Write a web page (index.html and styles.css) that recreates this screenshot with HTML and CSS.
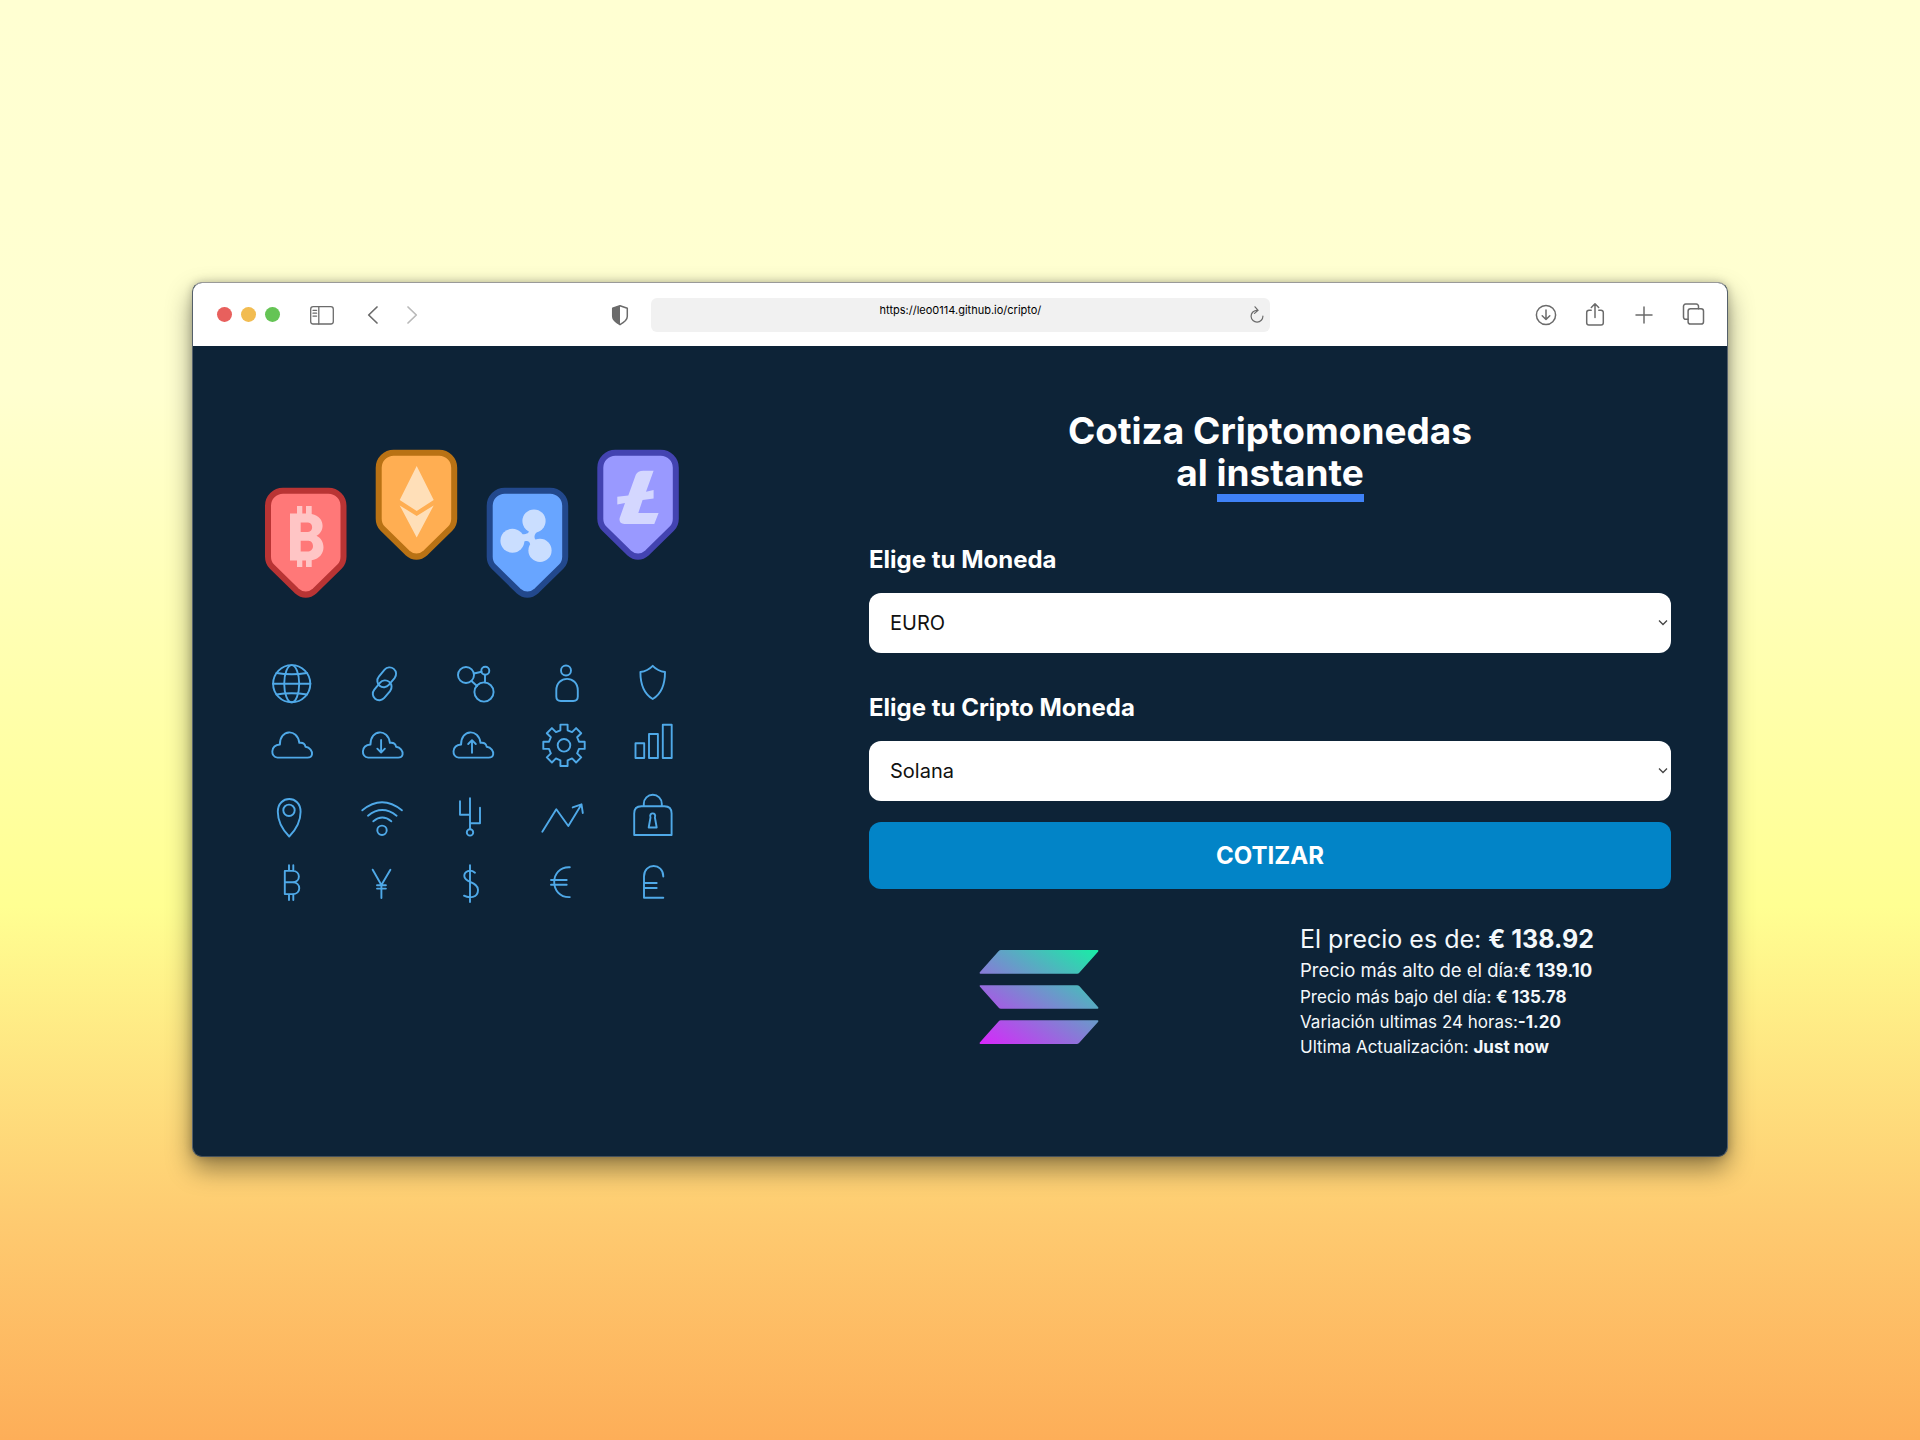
FILE: index.html
```html
<!DOCTYPE html>
<html lang="es">
<head>
<meta charset="utf-8">
<title>Cotiza Criptomonedas</title>
<link rel="stylesheet" href="styles.css">
</head>
<body>
<div class="window">
  <header class="toolbar">
    <div class="lights"><i class="light red"></i><i class="light yellow"></i><i class="light green"></i></div>
    <svg class="icon sidebar" width="26" height="22" viewBox="309 302 26 22"><rect x="310.7" y="304.7" width="22.6" height="17.3" rx="2.5"/><path d="M318.8 304.7V322M313 308.3h3.6M313 311.2h3.6M313 314.1h3.6"/></svg>
    <svg class="icon back" width="12" height="20" viewBox="367 303.3 12 20"><path d="M377 305.3l-8.3 8 8.3 8"/></svg>
    <svg class="icon forward" width="12" height="20" viewBox="406 303.3 12 20"><path d="M408 305.3l8.3 8-8.3 8"/></svg>
    <svg class="icon privacy" width="18" height="22" viewBox="611 302.3 18 22"><path d="M620 304l7.3 2.6v8.2c0 3.6-3.2 5.8-7.3 8.2-4.1-2.4-7.3-4.6-7.3-8.2v-8.2z"/><path class="solid" d="M620 304v19c-4.1-2.4-7.3-4.6-7.3-8.2v-8.2z"/></svg>
    <div class="address">
      <span class="url">https://leo0114.github.io/cripto/</span>
      <svg class="icon reload" width="14" height="18" viewBox="1249 305 14 18"><path d="M1255.6 309.3a5.9 5.9 0 1 0 6.3 5.8M1254 305.8l3.1 3.6-3.6 3"/></svg>
    </div>
    <svg class="icon download" width="22" height="22" viewBox="1535 302.3 22 22"><circle cx="1546" cy="313.3" r="9.6"/><path d="M1546 308.3v9.4M1542.2 314l3.8 3.8 3.8-3.8"/></svg>
    <svg class="icon share" width="20" height="25" viewBox="1585.4 300 20 25"><path d="M1591.6 308.2h-2.2a2.3 2.3 0 0 0-2.3 2.3v10.2a2.3 2.3 0 0 0 2.3 2.3h12a2.3 2.3 0 0 0 2.3-2.3v-10.2a2.3 2.3 0 0 0-2.3-2.3h-2.2M1595.4 315.5v-13.3M1591.7 305.5l3.7-3.7 3.7 3.7"/></svg>
    <svg class="icon plus" width="18" height="18" viewBox="1635.5 304.5 18 18"><path d="M1644.5 305.5v16M1636.5 313.5h16"/></svg>
    <svg class="icon tabs" width="23" height="23" viewBox="1682.5 302 23 23"><path d="M1688.6 318.3h-2.4a2.2 2.2 0 0 1-2.2-2.2v-10.8a2.2 2.2 0 0 1 2.2-2.2h10.6a2.2 2.2 0 0 1 2.2 2.2v2.4"/><rect x="1688.6" y="307.7" width="15.4" height="15.4" rx="2.4"/></svg>
  </header>

  <main class="page">
    <svg class="art" width="430" height="460" viewBox="260 446 430 460">
      <defs>
        <path id="badge" d="M3 18a15 15 0 0 1 15-15h45.5a15 15 0 0 1 15 15V69q0 6-4 10L50 103q-9.25 8-18.5 0L7 79q-4-4-4-10Z"/>
        <path id="cloud" d="M6.5 25.3C-.6 25-1 13 8.9 12.2 8.7-3.2 26.5-4 28.3 10.5c3.700-.5 5.700 1.200 6.200 4C39 15 41.400 19 41 22c-.4 2.500-2 3.300-4.500 3.300Z"/>
      </defs>
      <g class="badge btc" transform="translate(265 487.700)">
        <use href="#badge"/>
        <path class="mark" fill-rule="evenodd" d="M25 25.700H32V18.300H37.300V25.700H41V18.300H46.700V26.200C60 28.500 60.500 43.500 51.500 48 61.500 52.500 61.500 70.500 46.700 72.500V79.300H41V72.700H37.300V79.300H32V72.700H25ZM35.700 34.700V44.300H43C48.500 44 48.500 35 43 34.700ZM35.700 53V63.700H43.500C49.500 63.300 49.500 53.400 43.500 53Z"/>
      </g>
      <g class="badge eth" transform="translate(375.700 449.700)">
        <use href="#badge"/>
        <path class="mark" d="M41 16.300 58 50.300 41 61.300 24 50.300ZM24 55.700 41 66.300 58 55.700 41 87.700Z"/>
      </g>
      <g class="badge xrp" transform="translate(486.700 487.700)">
        <use href="#badge"/>
        <g class="mark"><circle cx="47.300" cy="33.300" r="11.600"/><circle cx="25.700" cy="53" r="12"/><circle cx="53.300" cy="62.700" r="11.600"/><path d="M42 42c.8 3-1 4.500-6.500 4.500v8c5-2 7.500-1.500 8 2.500l6-4.500c-2.500-2-2.500-6 2-9.500Z"/></g>
      </g>
      <g class="badge ltc" transform="translate(597.300 449.700)">
        <use href="#badge"/>
        <path class="mark" d="M46 21H56.300L48.700 42 56.300 40.300V48.700L45.300 50.300 41 63.300H61.300L57 74.300H27Q21.500 74 22.300 68.500L27.700 53.300 20 54.700V47L31 45.700 38.500 25Q40.500 21 46 21Z"/>
      </g>

      <g class="line">
        <circle cx="291.700" cy="683.700" r="18.600"/><ellipse cx="291.700" cy="683.700" rx="7.500" ry="18.600"/><path d="M273 683.700h37.400M276.500 673q15.200 2.400 30.400 0M276.500 694.500q15.200-2.400 30.400 0"/>
        <rect x="375.700" y="670.800" width="22" height="13" rx="6.500" transform="rotate(-50 386.700 677.300)"/><rect x="371.200" y="683.800" width="22" height="13" rx="6.500" transform="rotate(-50 382.200 690.300)"/>
        <circle cx="466" cy="675" r="8"/><circle cx="485.300" cy="670.700" r="4"/><circle cx="484" cy="692" r="9.600"/><path d="M474 673.500l7.500-1.700M485 674.700v7.700M471.500 681l5.500 5"/>
        <circle cx="566" cy="670.500" r="5"/><path d="M556.300 690.500c0-15.500 21.500-15.500 21.500 0v6q0 4.500-4.500 4.500h-12.500q-4.500 0-4.500-4.500Z"/>
        <path d="M652.700 665.800q5 5.200 12.300 6.200c0 11-2 21-12.300 27-10.300-6-12.300-16-12.300-27q7.300-1 12.300-6.200Z"/>

        <use href="#cloud" x="271" y="732.300"/>
        <use href="#cloud" x="361.600" y="732.300"/><path d="M381.100 740v12.500M377.300 748.700l3.800 3.800 3.800-3.800"/>
        <use href="#cloud" x="452.200" y="732.300"/><path d="M472 752.700V740.200M468.200 744l3.800-3.800 3.800 3.800"/>
        <g transform="translate(564 745.300)"><path d="M-3.600-15V-20.700H3.600V-15L8.060-13.150 12.090-17.180 17.180-12.090 13.150-8.060 15-3.600H20.700V3.600H15L13.150 8.060 17.180 12.090 12.090 17.180 8.060 13.150 3.600 15V20.700H-3.600V15L-8.060 13.150-12.090 17.180-17.180 12.090-13.150 8.060-15 3.600H-20.700V-3.600H-15L-13.150-8.060-17.180-12.090-12.090-17.180-8.060-13.150Z"/><circle r="6.300"/></g>
        <path d="M635.500 743.200h8.700v14.800h-8.700ZM649 734h8.900v24h-8.900ZM662.800 724.700h8.900v33.300h-8.900Z"/>

        <path d="M289.200 836.500c-7-7-11.400-16-11.400-24.700 0-17 22.800-17 22.800 0 0 8.700-4.400 17.700-11.400 24.700Z"/><circle cx="289" cy="810.300" r="5.700"/>
        <circle cx="382" cy="830.300" r="4.700"/><path d="M362.300 810.300q19.700-16 39.600 0M368 815.700q14.200-11.200 28.600 0M373.300 821.300q9-7.400 18 0"/>
        <path d="M470 798.300V829M460 801.300v13.400h10M480 807.700v15.600h-10"/><circle cx="470" cy="832.400" r="3.200"/>
        <path d="M542.300 831.700l14-22.400 12 16.700 13-21.300M572.700 807.400l8.800-3.100 1.300 8.700"/>
        <path d="M634.200 835v-21.500q0-7.200 7.200-7.200h23q7.200 0 7.200 7.200V835ZM643.800 806.300v-2.500a9 9 0 0 1 18 0v2.500M650.500 817.500c-2-5.500 6.400-5.500 4.400 0l1.800 10h-8Z"/>

        <path d="M284.800 870.900V894.100M284.800 870.900H292.500C301 870.900 301 882.300 292.500 882.300H284.800M292.500 882.300C301.500 882.300 301.500 894.100 292.500 894.100H284.800M289 865.300v5.600M293.300 865.300v5.600M289 894.100v5.900M293.300 894.100v5.900"/>
        <path d="M372.700 869.700l8.700 15.300 9-15.300M381.400 885v13M377 885.300h8.900M377 888.600h8.900"/>
        <path d="M470 865.300V902M475 872.700c-5-4.200-10.700-1.200-10.700 3.300 0 7 13.700 5.500 13.700 14 0 8-9 8.500-14 5.700"/>
        <path d="M569.800 867.200c-20.800-1-20.800 30.600 0 29.900M551 880h15.700M551 884.700h15.700"/>
        <path d="M663.300 876.500c0-14-19.300-14-19.300 0V897.700H663.300M644 883h12.700M644 888h12.700"/>
      </g>
    </svg>

    <section class="quote">
      <h1 class="title">Cotiza Criptomonedas al <span class="marked">instante</span></h1>
      <form class="form">
        <label class="label">Elige tu Moneda</label>
        <div class="select"><span>EURO</span><svg class="chevron" width="10" height="8" viewBox="0 0 10 8"><path d="M1 1.500l4 4 4-4"/></svg></div>
        <label class="label">Elige tu Cripto Moneda</label>
        <div class="select"><span>Solana</span><svg class="chevron" width="10" height="8" viewBox="0 0 10 8"><path d="M1 1.500l4 4 4-4"/></svg></div>
        <button class="submit" type="button">COTIZAR</button>
      </form>
      <div class="result">
        <svg class="coin" width="120" height="94" viewBox="979 950.300 120 94">
          <defs><linearGradient id="sol" gradientUnits="userSpaceOnUse" x1="1083" y1="937" x2="1003" y2="1060"><stop offset="0" stop-color="#14f2a4"/><stop offset="1" stop-color="#d926fb"/></linearGradient></defs>
          <path fill="url(#sol)" d="M1001 950.300H1097.500Q1099 950.500 1098 952L1079.500 972.700Q1078.500 974 1077 974H980.500Q979 973.800 980 972.300L998.500 951.600Q999.500 950.300 1001 950.300ZM1001 1009H1097.500Q1099 1008.800 1098 1007.300L1079.500 986.600Q1078.500 985.500 1077 985.500H980.500Q979 985.600 980 987.100L998.500 1007.800Q999.500 1009 1001 1009ZM1001 1020.500H1097.500Q1099 1020.700 1098 1022.200L1079.500 1042.900Q1078.500 1044.200 1077 1044.200H980.500Q979 1044 980 1042.500L998.500 1021.800Q999.500 1020.500 1001 1020.500Z"/>
        </svg>
        <div class="prices">
          <p class="price">El precio es de: <b>€ 138.92</b></p>
          <p class="high">Precio más alto de el día:<b>€ 139.10</b></p>
          <p class="low">Precio más bajo del día: <b>€ 135.78</b></p>
          <p class="change">Variación ultimas 24 horas:<b>-1.20</b></p>
          <p class="updated">Ultima Actualización: <b>Just now</b></p>
        </div>
      </div>
    </section>
  </main>
</div>
</body>
</html>
```
FILE: styles.css
```css
* { box-sizing: border-box; margin: 0; padding: 0; }

body {
  height: 1440px;
  padding: 282px 192px 0;
  overflow: hidden;
  font-family: Inter, "Liberation Sans", sans-serif;
  background: linear-gradient(#ffffd2 0%, #ffffd0 27%, #ffff92 63%, #feca70 85%, #fdae58 100%);
}

.window {
  width: 1536px;
  height: 875px;
  border-radius: 10px;
  background: #0d2337;
  border: 1px solid #8f8f95;
  border-color: #9a9a98 #55606a #44505a #55606a;
  overflow: hidden;
  box-shadow: 0 12px 26px rgba(0, 0, 0, .42), 0 0 8px rgba(0, 0, 0, .22);
}

.toolbar {
  display: flex;
  align-items: center;
  height: 63px;
  padding-left: 24px;
  background: #fff;
}

.lights { display: flex; gap: 9.300px; }
.light { width: 14.800px; height: 14.800px; border-radius: 50%; }
.red { background: #e8605d; }
.yellow { background: #f2bc51; }
.green { background: #65c455; }

.icon { flex: none; fill: none; stroke: #6b6b6b; stroke-width: 1.500; stroke-linecap: round; stroke-linejoin: round; }
.icon .solid { fill: #6b6b6b; stroke: none; }
.sidebar { margin-left: 29px; stroke-width: 1.300; }
.back { margin-left: 32px; stroke-width: 1.700; }
.forward { margin-left: 27px; stroke: #b9b9b9; stroke-width: 1.700; }
.privacy { margin-left: 193px; }
.download { margin-left: 265px; }
.share { margin-left: 28.400px; }
.plus { margin-left: 30px; }
.tabs { margin-left: 29px; }

.address {
  display: flex;
  align-items: center;
  width: 619px;
  height: 34px;
  margin-left: 22px;
  padding: 0 6px 0 20px;
  border-radius: 6px;
  background: #f1f1f1;
}
.url { flex: 1; padding-bottom: 9px; text-align: center; font-size: 11px; line-height: 14px; color: #000; }
.reload { stroke-width: 1.200; }

.page {
  display: flex;
  justify-content: space-between;
  padding: 64px 56px 0 67px;
}

.art { flex: none; margin-top: 36px; }
.badge { stroke-width: 6; stroke-linejoin: round; }
.mark { stroke: none; }
.btc { fill: #ff7878; stroke: #b93434; }
.btc .mark { fill: #ffc5c5; }
.eth { fill: #ffae52; stroke: #b97214; }
.eth .mark { fill: #ffdfb8; }
.xrp { fill: #68a5ff; stroke: #22488c; }
.xrp .mark { fill: #cadeff; }
.ltc { fill: #9999ff; stroke: #4343b1; }
.ltc .mark { fill: #d4d7ff; }
.line { fill: none; stroke: #4fa9e8; stroke-width: 1.900; stroke-linecap: round; stroke-linejoin: round; }

.quote { width: 802px; color: #fff; }

.title {
  width: 440px;
  margin: 0 auto;
  text-align: center;
  font-size: 37px;
  line-height: 42px;
  font-weight: 700;
}
.marked { display: inline-block; border-bottom: 8px solid #3f82f7; }

.form { display: flex; flex-direction: column; margin-top: 43px; }
.label { height: 30px; font-size: 24px; line-height: 30px; font-weight: 700; }
.select {
  display: flex;
  align-items: center;
  justify-content: space-between;
  height: 60px;
  margin: 18px 0 40px;
  padding: 0 3px 0 21px;
  border-radius: 12px;
  background: #fff;
  font-size: 20px;
  color: #111;
}
.select:nth-of-type(2) { margin-bottom: 21px; }
.chevron { fill: none; stroke: #444; stroke-width: 1.300; }
.submit {
  height: 67px;
  border: 0;
  border-radius: 12px;
  background: #0284c7;
  font: 700 24px/30px Inter, "Liberation Sans", sans-serif;
  color: #fff;
}

.result { display: flex; align-items: flex-start; padding: 34px 0 0 110px; }
.coin { flex: none; margin-top: 27px; }
.prices { margin-left: 201px; white-space: nowrap; font-size: 17px; line-height: 25px; color: #f4f8fb; }
.price { font-size: 25px; line-height: 32px; }
.high { font-size: 18.500px; line-height: 30px; }
```
